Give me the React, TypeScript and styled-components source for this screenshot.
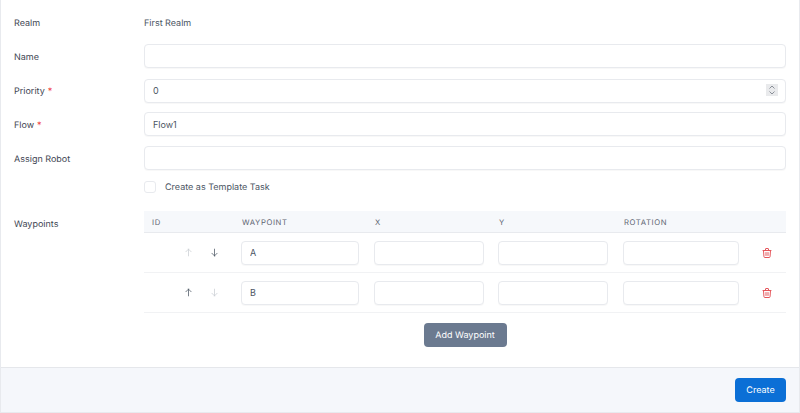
import React from "react";
import styled, { createGlobalStyle } from "styled-components";
import { HiOutlineTrash, HiOutlineArrowUp, HiOutlineArrowDown } from "react-icons/hi";

const Global = createGlobalStyle`
  html, body { margin: 0; padding: 0; background: #fff; }
  body { font-family: Inter, "Liberation Sans", sans-serif; text-rendering: geometricPrecision; }
  * { box-sizing: border-box; }
`;

const Panel = styled.div`
  width: 800px;
  height: 413px;
  display: flex;
  flex-direction: column;
  background: #fff;
  border-left: 1px solid #e8eaee;
  border-right: 1px solid #e8eaee;
  border-bottom: 1px solid #e8eaee;
  overflow: hidden;
`;

const Body = styled.div`
  flex: 1;
  padding: 10px 13px 0 13px;
  display: flex;
  flex-direction: column;
`;

const Row = styled.div<{ $h?: number; $mb?: number }>`
  display: grid;
  grid-template-columns: 130px 1fr;
  align-items: center;
  height: ${(p) => p.$h ?? 24}px;
  margin-bottom: ${(p) => p.$mb ?? 10}px;
`;

const Label = styled.label`
  padding-top: 2px;
  font-size: 9px;
  font-weight: 400;
  color: #3f4754;
`;

const Star = styled.span`
  color: #ef4444;
  margin-left: 3px;
`;

const StaticValue = styled.div`
  padding-top: 2px;
  font-size: 9px;
  color: #4b5563;
`;

const Input = styled.input`
  width: 100%;
  height: 24px;
  padding: 0 8px;
  font-family: inherit;
  font-size: 9px;
  color: #4b5563;
  background: #fff;
  border: 1px solid #e8eaee;
  border-radius: 4px;
  box-shadow: 0 1px 1px rgba(0, 0, 0, 0.03);
  outline: none;
  &::-webkit-inner-spin-button {
    display: none;
  }
`;

const NumberField = styled.div`
  position: relative;
`;

const Spinner = styled.span`
  position: absolute;
  right: 8px;
  top: 6px;
  width: 12px;
  height: 12px;
  display: flex;
  align-items: center;
  justify-content: center;
  background: #e9eaec;
  color: #8b9098;
`;

const CheckLine = styled.div`
  display: flex;
  align-items: center;
  gap: 9px;
  font-size: 9px;
  color: #4b5563;
`;

const CheckText = styled.span`
  padding-top: 2px;
`;

const Check = styled.span`
  width: 12px;
  height: 12px;
  border: 1px solid #e8eaee;
  border-radius: 3px;
  background: #fff;
`;

const WaypointsRow = styled.div`
  display: grid;
  grid-template-columns: 130px 1fr;
  margin-top: 19px;
`;

const WaypointsLabel = styled(Label)`
  padding-top: 8px;
`;

const grid = `
  display: grid;
  grid-template-columns: 90px 133px 124px 125px 131px 1fr;
`;

const TableHead = styled.div`
  ${grid}
  height: 22px;
  padding-top: 1px;
  align-items: center;
  background: #f6f8fb;
  border-bottom: 1px solid #e8eaee;
`;

const HeadCell = styled.div`
  padding-left: 8px;
  font-size: 7.7px;
  font-weight: 400;
  letter-spacing: 0.6px;
  color: #5f6673;
  text-transform: uppercase;
`;

const TableRow = styled.div`
  ${grid}
  height: 40px;
  align-items: center;
  border-bottom: 1px solid #f1f2f4;
`;

const MoveCell = styled.div`
  display: flex;
  justify-content: flex-end;
  align-items: center;
  gap: 17px;
  padding-right: 15px;
`;

const Move = styled.span<{ $off?: boolean }>`
  display: flex;
  font-size: 9px;
  color: ${(p) => (p.$off ? "#c9cdd3" : "#4b5563")};
`;

const Cell = styled.div<{ $right?: number }>`
  padding-left: 7px;
  padding-right: ${(p) => p.$right ?? 7}px;
`;

const DeleteCell = styled.div`
  display: flex;
  justify-content: center;
  font-size: 12px;
  color: #e5565b;
`;

const AddWrap = styled.div`
  display: flex;
  justify-content: center;
  margin-top: 10px;
`;

const Button = styled.button<{ $bg: string }>`
  height: 24px;
  font-family: inherit;
  font-size: 9px;
  font-weight: 400;
  color: #fff;
  background: ${(p) => p.$bg};
  border: none;
  border-radius: 4px;
  padding: 0;
  text-rendering: geometricPrecision;
`;

const AddButton = styled(Button)`
  width: 83px;
`;

const CreateButton = styled(Button)`
  width: 51px;
`;

const Footer = styled.div`
  height: 45px;
  display: flex;
  align-items: center;
  justify-content: flex-end;
  padding-right: 13px;
  background: #f5f7fb;
  border-top: 1px solid #e5e7eb;
`;

const rows = [
  { name: "A", upOff: true, downOff: false },
  { name: "B", upOff: false, downOff: true },
];

export default function App() {
  return (
    <>
      <Global />
      <Panel>
        <Body>
          <Row>
            <Label>Realm</Label>
            <StaticValue>First Realm</StaticValue>
          </Row>
          <Row>
            <Label>Name</Label>
            <Input readOnly />
          </Row>
          <Row>
            <Label>Priority<Star>*</Star></Label>
            <NumberField>
              <Input type="number" readOnly defaultValue={0} />
              <Spinner>
                <svg width="8" height="10" viewBox="0 0 8 10" fill="none" stroke="currentColor" strokeWidth="1">
                  <path d="M1.5 3.5 L4 1 L6.5 3.5" />
                  <path d="M1.5 6.5 L4 9 L6.5 6.5" />
                </svg>
              </Spinner>
            </NumberField>
          </Row>
          <Row>
            <Label>Flow<Star>*</Star></Label>
            <Input readOnly defaultValue="Flow1" />
          </Row>
          <Row>
            <Label>Assign Robot</Label>
            <Input readOnly />
          </Row>
          <Row $h={12} $mb={0}>
            <span />
            <CheckLine><Check /><CheckText>Create as Template Task</CheckText></CheckLine>
          </Row>
          <WaypointsRow>
            <WaypointsLabel>Waypoints</WaypointsLabel>
            <div>
              <TableHead>
                <HeadCell>ID</HeadCell>
                <HeadCell>Waypoint</HeadCell>
                <HeadCell>X</HeadCell>
                <HeadCell>Y</HeadCell>
                <HeadCell>Rotation</HeadCell>
                <span />
              </TableHead>
              {rows.map((r) => (
                <TableRow key={r.name}>
                  <MoveCell>
                    <Move $off={r.upOff}><HiOutlineArrowUp /></Move>
                    <Move $off={r.downOff}><HiOutlineArrowDown /></Move>
                  </MoveCell>
                  <Cell $right={8}><Input readOnly defaultValue={r.name} /></Cell>
                  <Cell $right={7}><Input readOnly /></Cell>
                  <Cell $right={8}><Input readOnly /></Cell>
                  <Cell $right={8}><Input readOnly /></Cell>
                  <DeleteCell><HiOutlineTrash /></DeleteCell>
                </TableRow>
              ))}
              <AddWrap>
                <AddButton $bg="#6b7a90">Add Waypoint</AddButton>
              </AddWrap>
            </div>
          </WaypointsRow>
        </Body>
        <Footer>
          <CreateButton $bg="#0b6fd6">Create</CreateButton>
        </Footer>
      </Panel>
    </>
  );
}
